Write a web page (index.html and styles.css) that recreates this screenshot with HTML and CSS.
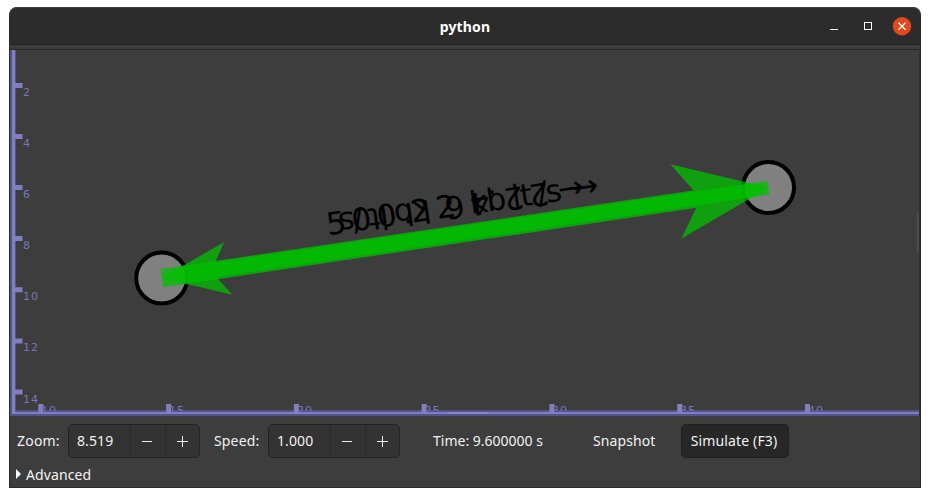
FILE: index.html
```
<!DOCTYPE html>
<html lang="en">
<head>
<meta charset="utf-8">
<title>python</title>
<link rel="stylesheet" href="styles.css">
</head>
<body>
<main class="window">
  <header class="titlebar">
    <h1 class="title">python</h1>
    <div class="controls">
      <svg width="88" height="20" viewBox="0 0 88 20">
        <path d="M6 12.500h8" stroke="#fff"/>
        <rect x="40.500" y="5.500" width="7" height="7" fill="none" stroke="#fff"/>
        <circle cx="78" cy="9.300" r="9.200" fill="#e2491a"/>
        <path d="M74.500 5.800l7 7m0-7l-7 7" stroke="#fff" stroke-width="1.300"/>
      </svg>
    </div>
  </header>
  <section class="viewport">
    <svg class="scene" width="910" height="366" viewBox="10 50 910 366">
      <g class="node">
        <circle cx="161.700" cy="278" r="25.500"/>
        <circle cx="768.500" cy="187.500" r="25.500"/>
      </g>
      <g class="link">
        <path d="M160.600 269L694 190.200L696.700 207.800L163.400 287.200Z"/>
        <path d="M768.500 187.500L670.300 164.300L693.500 190.200L696.300 207.800L681.300 238.700Z"/>
        <path d="M767.500 181L215.700 262.200L217.700 276.800L769.500 194.600Z"/>
        <path d="M161.700 278L224.200 242L215.800 261L218.300 279.200L232.300 294.800Z"/>
      </g>
      <g class="rate">
        <text transform="translate(328 235.200) rotate(-8.44)" x="0 25.560 51.110 76.670 85.190 110.750 136.300 144.820 161.860 187.420 195.940 212.970 221.490 238.530 248.550">500.22 kbit/s →</text>
        <text transform="translate(580.800 177.300) rotate(171.560)" x="-1.500 25.560 34.080 59.630 85.190 93.710 119.270 144.820 153.340 170.380 195.940 204.460 221.490 230.010">← 22.46 kbit/s</text>
      </g>
      <g class="axis-edge"><path d="M10 50h6v360h904v6H10z"/></g>
      <g class="axis">
        <path d="M12 50h3v362h904v2H12z"/>
        <path d="M15 83h7.500v5H15zM15 134h7.500v5H15zM15 185h7.500v5H15zM15 236h7.500v5H15zM15 287.300h7.500v5H15zM15 338.400h7.500v5H15zM15 389.500h7.500v5H15z"/>
        <path d="M38.300 404h5v8h-5zM166.100 404h5v8h-5zM293.900 404h5v8h-5zM421.600 404h5v8h-5zM549.400 404h5v8h-5zM677.200 404h5v8h-5zM805 404h5v8h-5z"/>
      </g>
      <clipPath id="above"><path d="M10 50h910v361H10z"/></clipPath>
      <g class="marks" clip-path="url(#above)">
        <text x="23" y="96">2</text><text x="23" y="147">4</text><text x="23" y="198">6</text><text x="23" y="249">8</text><text x="23" y="300">10</text><text x="23" y="351">12</text><text x="23" y="403">14</text>
        <text x="41" y="414">10</text><text x="169" y="414">15</text><text x="297" y="414">20</text><text x="424.500" y="414">25</text><text x="552" y="414">30</text><text x="680" y="414">35</text><text x="808" y="414">40</text>
      </g>
      <rect x="448" y="412" width="40" height="2" rx="1" fill="#8c88c4"/>
      <rect x="916.500" y="212" width="3" height="40" rx="1.500" fill="#4b4b4b"/>
    </svg>
  </section>
  <footer class="panel">
    <div class="toolbar">
      <span class="label zoom-label"><span class="t-zoom">Zoom:</span></span>
      <div class="spin">
        <span class="value">8.519</span>
        <span class="step"><svg width="11" height="11"><path d="M0 5.500h10"/></svg></span>
        <span class="step"><svg width="11" height="11"><path d="M0 5.500h11M5.500 0v11"/></svg></span>
      </div>
      <span class="label speed-label"><span class="t-speed">Speed:</span></span>
      <div class="spin">
        <span class="value">1.000</span>
        <span class="step"><svg width="11" height="11"><path d="M0 5.500h10"/></svg></span>
        <span class="step"><svg width="11" height="11"><path d="M0 5.500h11M5.500 0v11"/></svg></span>
      </div>
      <span class="label time"><span class="t-time">Time: 9.600000 s</span></span>
      <span class="label snapshot">Snapshot</span>
      <span class="simulate">Simulate (F3)</span>
    </div>
    <div class="advanced"><svg width="6" height="10"><path d="M0 0l5 5-5 5z" fill="#fff"/></svg><span>Advanced</span></div>
  </footer>
</main>
</body>
</html>
```
FILE: styles.css
```
* { box-sizing: border-box; }
body { margin: 0; padding: 7px 9px 9px; background: #fff; font-family: "Noto Sans", "Open Sans", sans-serif; font-size: 14px; color: #f2f2f1; }
svg { display: block; }
.window { width: 912px; height: 481px; background: #3d3d3d; border: 1px solid #2b2b2b; border-top: 0; border-radius: 8px 8px 0 0; overflow: hidden; }
.titlebar { height: 38px; background: #2c2c2c; border-top: 1px solid #414141; border-bottom: 1px solid #232323; display: grid; grid-template-columns: 1fr auto 1fr; align-items: center; border-radius: 7px 7px 0 0; }
.title { grid-column: 2; margin: 2px 0 0; font-size: 14px; font-weight: 700; line-height: 20px; letter-spacing: .15px; color: #fff; }
.controls { justify-self: end; padding: 1px 8px 0 0; }
.viewport { margin-top: 4px; border-top: 1px solid #292929; border-right: 1px solid #303030; height: 367px; overflow: hidden; }
.node { fill: #808080; stroke: #000; stroke-width: 4; }
.link { fill: rgba(0, 192, 0, .75); }
.rate { font: 31px "DejaVu Sans", sans-serif; fill: #000; }
.axis-edge { fill: #54528a; }
.axis { fill: #827fc0; }
.marks { font: 11px "DejaVu Sans", sans-serif; letter-spacing: 1px; fill: #7777b8; }
.toolbar { display: flex; height: 34px; margin-top: 8px; padding-left: 7px; line-height: 33px; white-space: nowrap; }
.zoom-label { width: 51px; }
.speed-label { width: 68px; padding-left: 14px; }
.t-zoom { letter-spacing: .2px; }
.t-speed { letter-spacing: .15px; }
.spin { width: 132px; height: 34px; line-height: 31px; display: grid; grid-template-columns: 61px 35px 34px; background: #333; border: 1px solid #222; border-radius: 5px; }
.value { padding-left: 8px; letter-spacing: .1px; }
.step { border-left: 1px solid #2c2c2c; display: grid; place-items: center; }
.step path { stroke: #eee; fill: none; }
.step:nth-child(2) { padding-right: 2px; }
.time { width: 160px; margin-left: 33px; }
.snapshot { width: 88px; letter-spacing: .1px; }
.simulate { width: 108px; height: 34px; line-height: 31px; background: #272727; border: 1px solid #202020; border-radius: 5px; text-align: center; letter-spacing: .15px; padding-right: 2px; }
.advanced { display: flex; align-items: center; gap: 4px; height: 20px; margin-top: 6px; padding-left: 6px; letter-spacing: .1px; }
```
